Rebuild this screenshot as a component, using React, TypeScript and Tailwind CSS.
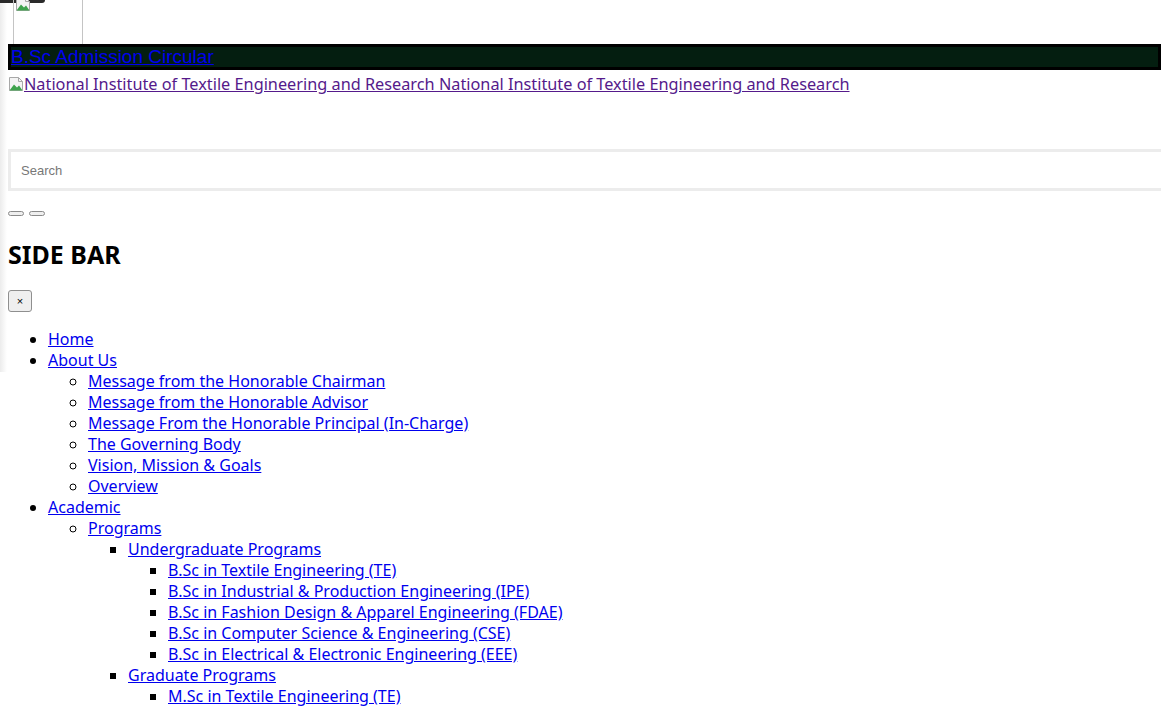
type Item = { label: string; children?: Item[] };

const menu: Item[] = [
  { label: "Home" },
  {
    label: "About Us",
    children: [
      { label: "Message from the Honorable Chairman" },
      { label: "Message from the Honorable Advisor" },
      { label: "Message From the Honorable Principal (In-Charge)" },
      { label: "The Governing Body" },
      { label: "Vision, Mission & Goals" },
      { label: "Overview" },
    ],
  },
  {
    label: "Academic",
    children: [
      {
        label: "Programs",
        children: [
          {
            label: "Undergraduate Programs",
            children: [
              { label: "B.Sc in Textile Engineering (TE)" },
              { label: "B.Sc in Industrial & Production Engineering (IPE)" },
              { label: "B.Sc in Fashion Design & Apparel Engineering (FDAE)" },
              { label: "B.Sc in Computer Science & Engineering (CSE)" },
              { label: "B.Sc in Electrical & Electronic Engineering (EEE)" },
            ],
          },
          {
            label: "Graduate Programs",
            children: [
              { label: "M.Sc in Textile Engineering (TE)" },
              { label: "M.Sc in Fashion Design & Apparel Engineering (FDAE)" },
            ],
          },
        ],
      },
    ],
  },
];

// broken image placeholder, like the browser draws it
const BrokenImage = ({ className = "" }: { className?: string }) => (
  <svg width="16" height="16" viewBox="0 0 16 16" className={className}>
    <path d="M1.5 1.5h9l4 4v9h-13z" fill="#f4f4f4" stroke="#a8a8a8" />
    <path d="M1.5 14.5l4.5-6 3 3 2-2 3.5 5z" fill="#3fa34d" />
    <path d="M10.5 1.5v4h4" fill="none" stroke="#a8a8a8" />
  </svg>
);

const listStyle = ["list-disc", "list-[circle]", "list-[square]", "list-[square]"];

const Menu = ({ items, depth }: { items: Item[]; depth: number }) => (
  <ul className={`${listStyle[depth]} pl-10`}>
    {items.map((it) => (
      <li key={it.label}>
        <a href="#" className="text-[#0000ee] underline">
          {it.label}
        </a>
        {it.children && <Menu items={it.children} depth={depth + 1} />}
      </li>
    ))}
  </ul>
);

const App = () => {
  return (
    <div className="relative min-h-screen overflow-hidden bg-white px-2 font-['Noto_Sans',sans-serif] text-[16px] leading-[21px] text-black">
      {/* sidebar shadow + top tab */}
      <div className="absolute left-0 top-0 h-[372px] w-[7px] bg-gradient-to-r from-[#ececec] to-white" />
      <div className="absolute left-0 top-0 h-[3px] w-[45px] rounded-br-[4px] bg-[#2a2a2a]" />

      <div className="relative ml-[5px] h-[44px] w-[70px] overflow-hidden border-x border-[#c4c4c4]">
        <BrokenImage className="absolute -top-[4px] left-[1px]" />
      </div>

      <div className="-mr-2 border-[3px] border-black bg-[#041e10] font-['Liberation_Sans',sans-serif] text-[19px] leading-[20px]">
        <a href="#" className="text-[#0000ee] underline">
          B.Sc Admission Circular
        </a>
      </div>

      <div className="mt-[4px] flex items-center text-[16.3px] leading-[20px]">
        <BrokenImage />
        <a href="#" className="text-[#551a8b] underline">
          National Institute of Textile Engineering and Research National Institute of Textile Engineering and Research
        </a>
      </div>

      <input
        placeholder="Search"
        className="mt-[55px] block h-[42px] w-[calc(100%+40px)] border-[3px] border-[#ececec] px-[10px] font-['Liberation_Sans',sans-serif] text-[13px] outline-none placeholder:text-[#777]"
      />

      <div className="mt-[20px] flex gap-[5px]">
        <button className="h-[5px] w-[16px] rounded-[3px] border border-[#8a8a8a] bg-[#efefef]" />
        <button className="h-[5px] w-[16px] rounded-[3px] border border-[#8a8a8a] bg-[#efefef]" />
      </div>

      <h2 className="mt-[22px] text-[25px] font-bold leading-[32px]">SIDE BAR</h2>

      <button className="mt-[20px] flex h-[22px] w-[24px] items-center justify-center rounded-[3px] border border-[#8f8f8f] bg-[#efefef] font-['Liberation_Sans',sans-serif] text-[11px] leading-none">
        ×
      </button>

      <nav className="mt-[17px]">
        <Menu items={menu} depth={0} />
      </nav>
    </div>
  );
};

export default App;
